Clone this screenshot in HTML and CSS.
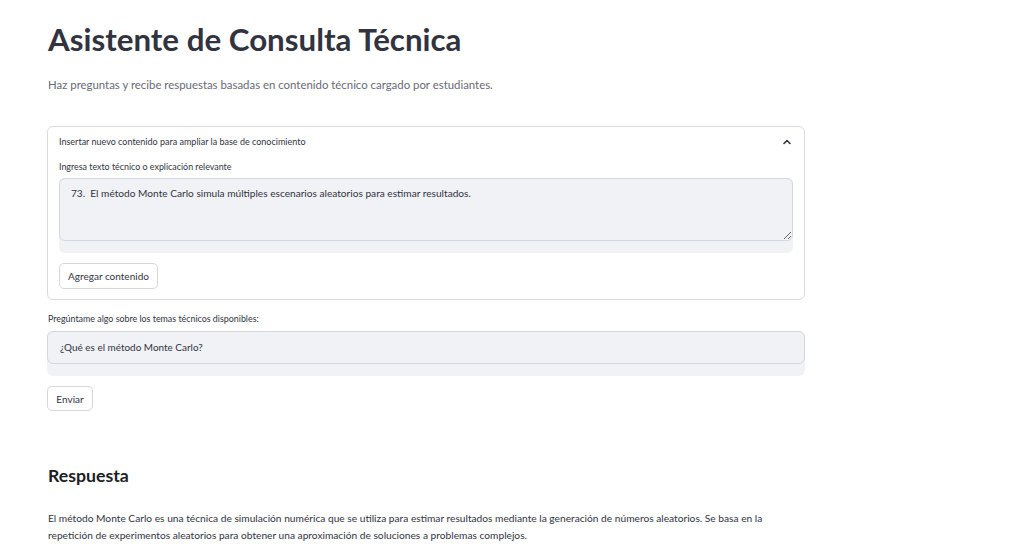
FILE: index.html
```html
<!DOCTYPE html>
<html lang="es">
<head>
<meta charset="utf-8">
<title>Asistente de Consulta Técnica</title>
<link rel="stylesheet" href="styles.css">
</head>
<body>
<main class="main">
  <h1 class="title">Asistente de Consulta Técnica</h1>
  <p class="subtitle">Haz preguntas y recibe respuestas basadas en contenido técnico cargado por estudiantes.</p>

  <section class="expander">
    <div class="expander-header">
      <span class="expander-title">Insertar nuevo contenido para ampliar la base de conocimiento</span>
      <svg class="chevron" width="12" height="12" viewBox="0 0 12 12" aria-hidden="true"><path d="M3 7.5 L6 4.5 L9 7.5" fill="none" stroke="#31333f" stroke-width="1.6" stroke-linecap="round" stroke-linejoin="round"/></svg>
    </div>
    <div class="expander-body">
      <label class="field-label">Ingresa texto técnico o explicación relevante</label>
      <div class="field-wrap">
        <textarea class="textarea" readonly>73.  El método Monte Carlo simula múltiples escenarios aleatorios para estimar resultados.</textarea>
      </div>
      <button class="btn btn-add">Agregar contenido</button>
    </div>
  </section>

  <label class="field-label question-label">Pregúntame algo sobre los temas técnicos disponibles:</label>
  <div class="field-wrap">
    <input class="input" type="text" value="¿Qué es el método Monte Carlo?" readonly>
  </div>
  <button class="btn btn-send">Enviar</button>

  <h3 class="answer-title">Respuesta</h3>
  <p class="answer">El método Monte Carlo es una técnica de simulación numérica que se utiliza para estimar resultados mediante la generación de números aleatorios. Se basa en la repetición de experimentos aleatorios para obtener una aproximación de soluciones a problemas complejos.</p>
</main>
</body>
</html>
```
FILE: styles.css
```css
* { box-sizing: border-box; }
html, body { margin: 0; padding: 0; background: #ffffff; }
body { font-family: Lato, "Liberation Sans", sans-serif; color: #31333f; }

.main {
  width: 805px;
  padding: 21px 0 0 47px;
}

.title {
  margin: 0 0 0 1px;
  font-weight: 700;
  font-size: 31.3px;
  line-height: 36px;
  color: #31333f;
}

.subtitle {
  margin: 20px 0 0 1px;
  font-size: 11.4px;
  line-height: 16px;
  color: #686a75;
}

.expander {
  margin-top: 33px;
  border: 1px solid #d9dadf;
  border-radius: 6px;
}

.expander-header {
  display: flex;
  align-items: center;
  justify-content: space-between;
  padding: 8px 11px 12px 11px;
}

.expander-title {
  font-size: 9px;
  line-height: 14px;
}

.chevron { display: block; }

.expander-body {
  padding: 0 11px 10px 11px;
}

.field-label {
  display: block;
  font-size: 8.9px;
  line-height: 12px;
  margin-bottom: 5px;
  color: #31333f;
}

.question-label {
  margin: 12.5px 0 6.5px 1px;
}

.field-wrap {
  background: #f0f2f6;
  border-radius: 6px;
  padding-bottom: 12px;
}

.textarea {
  display: block;
  width: 100%;
  height: 63px;
  margin: 0;
  padding: 7px 11px;
  border: 1px solid #d5d7de;
  border-radius: 6px;
  background: #f0f2f6;
  color: #31333f;
  font-family: Lato, "Liberation Sans", sans-serif;
  font-size: 10.15px;
  line-height: 14px;
  resize: vertical;
  outline: none;
}

.input {
  display: block;
  width: 100%;
  height: 33px;
  margin: 0;
  padding: 0 12px 2px 12px;
  border: 1px solid #d5d7de;
  border-radius: 6px;
  background: #f0f2f6;
  color: #31333f;
  font-family: Lato, "Liberation Sans", sans-serif;
  font-size: 9.95px;
  outline: none;
}

.btn {
  display: block;
  background: #ffffff;
  border: 1px solid #d6d7dc;
  border-radius: 5px;
  color: #31333f;
  font-family: Lato, "Liberation Sans", sans-serif;
  font-size: 10px;
  padding: 0 8px;
  cursor: pointer;
}

.btn-add {
  margin-top: 10px;
  height: 26px;
  width: 99px;
}

.btn-send {
  margin-top: 10px;
  height: 25px;
  width: 46px;
  padding: 0;
}

.answer-title {
  margin: 53.5px 0 0 1px;
  font-weight: 700;
  font-size: 17.7px;
  line-height: 22px;
  color: #1c1d25;
}

.answer {
  margin: 23.5px 0 0 1px;
  max-width: 740px;
  font-size: 10.2px;
  line-height: 17px;
  color: #31333f;
}
```
